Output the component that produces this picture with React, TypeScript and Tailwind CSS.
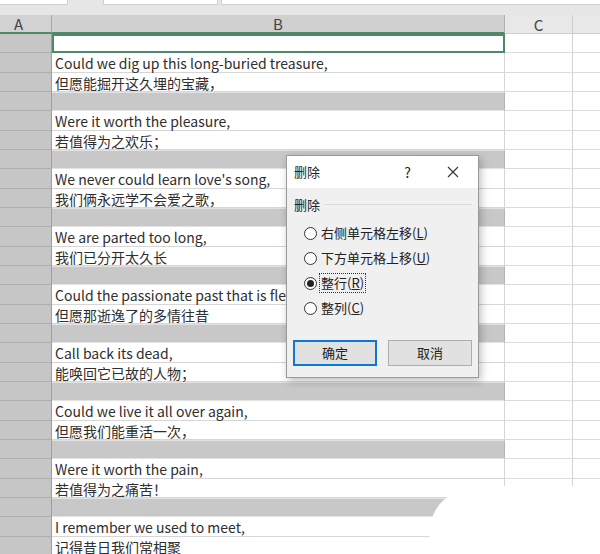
import React from 'react';

type Row = { kind: 'text' | 'gray' | 'active'; text?: string };

const rows: Row[] = [
  { kind: 'active' },
  { kind: 'text', text: 'Could we dig up this long-buried treasure,' },
  { kind: 'text', text: '但愿能掘开这久埋的宝藏，' },
  { kind: 'gray' },
  { kind: 'text', text: 'Were it worth the pleasure,' },
  { kind: 'text', text: '若值得为之欢乐；' },
  { kind: 'gray' },
  { kind: 'text', text: "We never could learn love's song," },
  { kind: 'text', text: '我们俩永远学不会爱之歌，' },
  { kind: 'gray' },
  { kind: 'text', text: 'We are parted too long,' },
  { kind: 'text', text: '我们已分开太久长' },
  { kind: 'gray' },
  { kind: 'text', text: 'Could the passionate past that is fled' },
  { kind: 'text', text: '但愿那逝逸了的多情往昔' },
  { kind: 'gray' },
  { kind: 'text', text: 'Call back its dead,' },
  { kind: 'text', text: '能唤回它已故的人物；' },
  { kind: 'gray' },
  { kind: 'text', text: 'Could we live it all over again,' },
  { kind: 'text', text: '但愿我们能重活一次，' },
  { kind: 'gray' },
  { kind: 'text', text: 'Were it worth the pain,' },
  { kind: 'text', text: '若值得为之痛苦！' },
  { kind: 'gray' },
  { kind: 'text', text: 'I remember we used to meet,' },
  { kind: 'text', text: '记得昔日我们常相聚' },
];

function SheetRow({ row }: { row: Row }) {
  return (
    <div className="flex h-[19.33px] shrink-0">
      <div className="w-[52px] shrink-0 bg-[#c6c6c6] border-b border-b-[#adadad] border-r border-r-[#9e9e9e]" />
      {row.kind === 'active' && (
        <div className="w-[453px] shrink-0 border-2 border-[#4f8866] bg-white" />
      )}
      {row.kind === 'gray' && (
        <div className="w-[453px] shrink-0 bg-[#c8c8c8] border-y border-y-[#e2e2e2] border-r border-r-[#b4b4b4]" />
      )}
      {row.kind === 'text' && (
        <div className="w-[453px] shrink-0 bg-white border-b border-b-[#d6d6d6] border-r border-r-[#d6d6d6] pl-[3px] pt-[3px] text-[14px] leading-[15px] text-[#2e2e2e] whitespace-nowrap">
          {row.text}
        </div>
      )}
      <div className="w-[68px] shrink-0 bg-white border-b border-b-[#dcdcdc] border-r border-r-[#d4d4d4]" />
      <div className="flex-1 bg-white border-b border-b-[#dcdcdc]" />
    </div>
  );
}

function Radio({ label, hot, checked, focus }: { label: string; hot: string; checked?: boolean; focus?: boolean }) {
  return (
    <div className="flex items-center h-[25px]">
      <div className="w-[13px] h-[13px] rounded-full border border-[#333] bg-white flex items-center justify-center">
        {checked && <div className="w-[7px] h-[7px] rounded-full bg-[#222]" />}
      </div>
      <div className={`ml-[3px] px-[1px] leading-[18px] ${focus ? 'outline-1 outline-dotted outline-[#333]' : ''}`}>
        {label}(<span className="underline">{hot}</span>)
      </div>
    </div>
  );
}

export default function App() {
  return (
    <div
      className="w-[600px] h-[554px] relative overflow-hidden bg-white flex flex-col"
      style={{ fontFamily: '"Noto Sans CJK SC", "Noto Sans", sans-serif' }}
    >
      {/* ribbon leftovers */}
      <div className="h-[15px] shrink-0 bg-[#e6e6e6] flex gap-[3px]">
        <div className="w-[68px] h-[5px] bg-white border-b border-r border-[#d0d0d0]" />
        <div className="w-[29px]" />
        <div className="w-[115px] h-[5px] bg-white border-b border-x border-[#d0d0d0]" />
        <div className="flex-1 h-[5px] bg-white border-b border-l border-[#d0d0d0]" />
      </div>

      {/* column headers */}
      <div className="flex h-[19px] shrink-0 text-[15px] text-[#444]">
        <div className="w-[52px] shrink-0 bg-[#d2d2d2] border-b-2 border-b-[#4f8866] border-r border-r-[#a8a8a8] flex items-center pl-[14px] leading-none">
          A
        </div>
        <div className="w-[453px] shrink-0 bg-[#d0d0d0] border-b-2 border-b-[#4f8866] border-r border-r-[#b0b0b0] flex items-center justify-center leading-none">
          B
        </div>
        <div className="w-[68px] shrink-0 bg-[#e8e8e8] border-b border-b-[#cfcfcf] border-r border-r-[#cfcfcf] flex items-center justify-center leading-none">
          C
        </div>
        <div className="flex-1 bg-[#e8e8e8] border-b border-b-[#cfcfcf]" />
      </div>

      {rows.map((r, i) => (
        <SheetRow key={i} row={r} />
      ))}

      {/* page curl at bottom right */}
      <svg className="absolute left-0 top-0 pointer-events-none" width="600" height="554" viewBox="0 0 600 554">
        <path d="M 600 486 L 600 554 L 428 554 L 431 521 Q 436 503 452 494 Q 468 487 500 486 Z" fill="#ffffff" />
      </svg>

      {/* delete dialog */}
      <div className="absolute left-[286px] top-[155px] w-[193px] h-[223px] border border-[#9a9a9a] bg-[#f0f0f0] shadow-[2px_3px_8px_rgba(0,0,0,0.25)] flex flex-col text-[13px] text-[#222]">
        <div className="h-[32px] bg-white flex items-center pl-[7px] pr-[19px]">
          <span className="flex-1">删除</span>
          <span className="mr-[36px] text-[14px]">?</span>
          <svg width="12" height="12" viewBox="0 0 12 12">
            <path d="M1 1 L11 11 M11 1 L1 11" stroke="#333" strokeWidth="1.1" fill="none" />
          </svg>
        </div>
        <div className="flex items-center pl-[7px] pr-[6px] mt-[7px]">
          <span>删除</span>
          <div className="flex-1 h-px bg-[#dcdcdc] ml-[4px]" />
        </div>
        <div className="flex flex-col pl-[17px] mt-[6px]">
          <Radio label="右侧单元格左移" hot="L" />
          <Radio label="下方单元格上移" hot="U" />
          <Radio label="整行" hot="R" checked focus />
          <Radio label="整列" hot="C" />
        </div>
        <div className="flex gap-[11px] pl-[6px] mt-[19px]">
          <button className="w-[84px] h-[26px] border-2 border-[#0a78d4] bg-[#e1e1e1] flex items-center justify-center">
            确定
          </button>
          <button className="w-[84px] h-[26px] border border-[#adadad] bg-[#e1e1e1] flex items-center justify-center">
            取消
          </button>
        </div>
      </div>
    </div>
  );
}
